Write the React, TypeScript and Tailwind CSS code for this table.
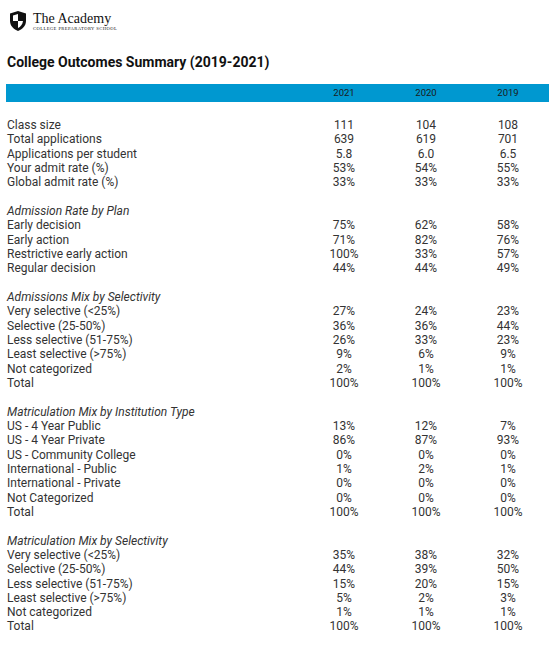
import React from "react";

type Row = { label: string; v: [string, string, string] };
type Section = { title?: string; rows: Row[] };

const SECTIONS: Section[] = [
  {
    rows: [
      { label: "Class size", v: ["111", "104", "108"] },
      { label: "Total applications", v: ["639", "619", "701"] },
      { label: "Applications per student", v: ["5.8", "6.0", "6.5"] },
      { label: "Your admit rate (%)", v: ["53%", "54%", "55%"] },
      { label: "Global admit rate (%)", v: ["33%", "33%", "33%"] },
    ],
  },
  {
    title: "Admission Rate by Plan",
    rows: [
      { label: "Early decision", v: ["75%", "62%", "58%"] },
      { label: "Early action", v: ["71%", "82%", "76%"] },
      { label: "Restrictive early action", v: ["100%", "33%", "57%"] },
      { label: "Regular decision", v: ["44%", "44%", "49%"] },
    ],
  },
  {
    title: "Admissions Mix by Selectivity",
    rows: [
      { label: "Very selective (<25%)", v: ["27%", "24%", "23%"] },
      { label: "Selective (25-50%)", v: ["36%", "36%", "44%"] },
      { label: "Less selective (51-75%)", v: ["26%", "33%", "23%"] },
      { label: "Least selective (>75%)", v: ["9%", "6%", "9%"] },
      { label: "Not categorized", v: ["2%", "1%", "1%"] },
      { label: "Total", v: ["100%", "100%", "100%"] },
    ],
  },
  {
    title: "Matriculation Mix by Institution Type",
    rows: [
      { label: "US - 4 Year Public", v: ["13%", "12%", "7%"] },
      { label: "US - 4 Year Private", v: ["86%", "87%", "93%"] },
      { label: "US - Community College", v: ["0%", "0%", "0%"] },
      { label: "International - Public", v: ["1%", "2%", "1%"] },
      { label: "International - Private", v: ["0%", "0%", "0%"] },
      { label: "Not Categorized", v: ["0%", "0%", "0%"] },
      { label: "Total", v: ["100%", "100%", "100%"] },
    ],
  },
  {
    title: "Matriculation Mix by Selectivity",
    rows: [
      { label: "Very selective (<25%)", v: ["35%", "38%", "32%"] },
      { label: "Selective (25-50%)", v: ["44%", "39%", "50%"] },
      { label: "Less selective (51-75%)", v: ["15%", "20%", "15%"] },
      { label: "Least selective (>75%)", v: ["5%", "2%", "3%"] },
      { label: "Not categorized", v: ["1%", "1%", "1%"] },
      { label: "Total", v: ["100%", "100%", "100%"] },
    ],
  },
];

function Shield() {
  return (
    <svg width="18" height="22" viewBox="0 0 18 22" className="shrink-0">
      <path d="M9 1 L17 3.5 V11 C17 16 13 19.5 9 21 C5 19.5 1 16 1 11 V3.5 Z" fill="#111" />
      {/* inner quadrants */}
      <path d="M9 4 L4 5.6 V11 H9 Z" fill="#fff" />
      <path d="M9 11 H14 C13.6 14.5 11.5 16.8 9 18 Z" fill="#fff" />
    </svg>
  );
}

function DataRow({ label, v, italic }: { label: string; v?: string[]; italic?: boolean }) {
  return (
    <div className="flex h-[14.34px] items-center leading-[14.34px]">
      <div className={`flex-1 pl-[1px] ${italic ? "italic" : ""}`}>{label}</div>
      {v ? (
        <>
          <div className="w-[82px] text-center">{v[0]}</div>
          <div className="w-[82px] text-center">{v[1]}</div>
          <div className="w-[82px] text-center">{v[2]}</div>
        </>
      ) : null}
    </div>
  );
}

export default function App() {
  return (
    <div className="min-h-screen bg-white pl-[6px] pr-[9px] text-[#333] [font-family:Roboto,'Liberation_Sans',sans-serif]">
      {/* Logo */}
      <div className="flex items-center gap-[6px] pl-[3px] pt-[10px]">
        <Shield />
        <div className="[font-family:'Liberation_Serif',serif] text-[#111]">
          <div className="text-[14px] leading-[15px]">The Academy</div>
          <div className="text-[4.6px] leading-[6px] tracking-[0.09em] uppercase">
            College Preparatory School
          </div>
        </div>
      </div>

      {/* Title */}
      <h1 className="mt-[22px] pl-[1px] text-[14px] font-bold leading-[16px] text-[#111]">
        College Outcomes Summary (2019-2021)
      </h1>

      {/* Header bar */}
      <div className="mt-[14px] flex h-[18px] items-center bg-[#0098d0] text-[9.5px] text-[#1a1a1a]">
        <div className="flex-1" />
        <div className="w-[82px] text-center">2021</div>
        <div className="w-[82px] text-center">2020</div>
        <div className="w-[82px] text-center">2019</div>
      </div>

      {/* Body */}
      <div className="mt-[16px] text-[12px]">
        {SECTIONS.map((s, i) => (
          <div key={i} className={i > 0 ? "mt-[14.34px]" : ""}>
            {s.title ? <DataRow label={s.title} italic /> : null}
            {s.rows.map((r) => (
              <DataRow key={r.label} label={r.label} v={r.v} />
            ))}
          </div>
        ))}
      </div>
    </div>
  );
}
